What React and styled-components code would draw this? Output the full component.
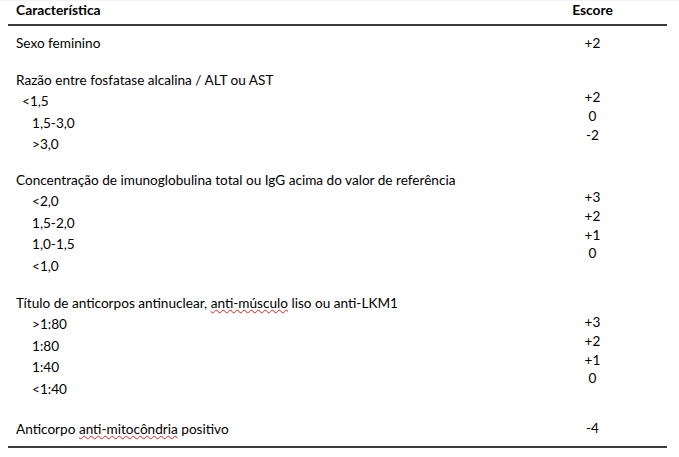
import React from 'react'
import styled, { createGlobalStyle } from 'styled-components'

const Global = createGlobalStyle`
  html, body {
    margin: 0;
    padding: 0;
    background: #fff;
  }
  body {
    font-family: Lato, "Open Sans", "Liberation Sans", sans-serif;
    color: #000;
  }
`

const Page = styled.div`
  width: 679px;
  height: 457px;
  box-sizing: border-box;
  border-top: 1px solid #f4f4f4;
  background: #fff;
  overflow: hidden;
`

const Table = styled.div`
  margin-left: 8px;
  width: 659px;
  border-bottom: 2px solid #3d3d3d;
  padding-bottom: 6px;
`

const Head = styled.div`
  display: grid;
  grid-template-columns: 1fr 149px;
  height: 23px;
  border-bottom: 2px solid #3a3a3a;
  font-weight: 700;
  font-size: 13.8px;
  line-height: 18px;
`

const HeadCell = styled.div`
  padding-left: ${p => (p.center ? 0 : 8)}px;
  text-align: ${p => (p.center ? 'center' : 'left')};
`

const Section = styled.div`
  display: grid;
  grid-template-columns: 1fr 149px;
  margin-top: ${p => p.space}px;
  font-size: 13.6px;
`

const Left = styled.div`
  display: flex;
  flex-direction: column;
  padding-left: 8px;
  line-height: 21.4px;
`

const Line = styled.div`
  padding-left: ${p => p.indent || 0}px;
  white-space: nowrap;
`

const Right = styled.div`
  display: flex;
  flex-direction: column;
  align-items: center;
  padding-top: ${p => p.offset}px;
  line-height: 18.7px;
`

const Spell = styled.span`
  text-decoration: underline wavy #e02020;
  text-decoration-thickness: 1px;
  text-underline-offset: 1px;
`

const sections = [
  { space: 7, offset: 1.3, title: 'Sexo feminino', items: [], scores: ['+2'] },
  {
    space: 15.5,
    offset: 18.3,
    title: 'Razão entre fosfatase alcalina / ALT ou AST',
    items: [['<1,5', 6], ['1,5-3,0', 16], ['>3,0', 16]],
    scores: ['+2', '0', '-2'],
  },
  {
    space: 14.4,
    offset: 18.3,
    title: 'Concentração de imunoglobulina total ou IgG acima do valor de referência',
    items: [['<2,0', 16], ['1,5-2,0', 16], ['1,0-1,5', 16], ['<1,0', 16]],
    scores: ['+3', '+2', '+1', '0'],
  },
  {
    space: 16,
    offset: 20.3,
    title: (
      <>
        Título de anticorpos antinuclear, <Spell>anti-músculo</Spell> liso ou anti-LKM1
      </>
    ),
    items: [['>1:80', 16], ['1:80', 16], ['1:40', 16], ['<1:40', 16]],
    scores: ['+3', '+2', '+1', '0'],
  },
  {
    space: 19,
    offset: 0.4,
    title: (
      <>
        Anticorpo <Spell>anti-mitocôndria</Spell> positivo
      </>
    ),
    items: [],
    scores: ['-4'],
  },
]

export default function App() {
  return (
    <Page>
      <Global />
      <Table>
        <Head>
          <HeadCell>Característica</HeadCell>
          <HeadCell center>Escore</HeadCell>
        </Head>
        {sections.map((s, i) => (
          <Section key={i} space={s.space}>
            <Left>
              <Line>{s.title}</Line>
              {s.items.map(([label, indent]) => (
                <Line key={label} indent={indent}>
                  {label}
                </Line>
              ))}
            </Left>
            <Right offset={s.offset}>
              {s.scores.map((v, j) => (
                <div key={j}>{v}</div>
              ))}
            </Right>
          </Section>
        ))}
      </Table>
    </Page>
  )
}
